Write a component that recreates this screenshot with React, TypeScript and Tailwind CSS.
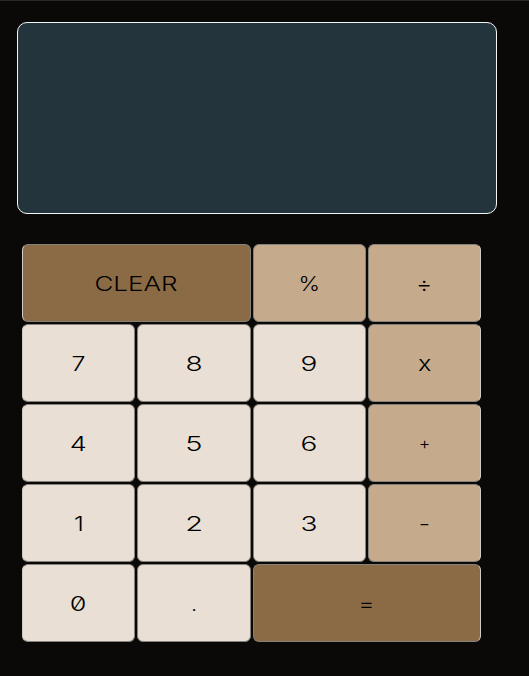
import React from "react";

type Tone = "light" | "tan" | "brown";

interface Key {
  label: string;
  tone: Tone;
  wide?: boolean;
  edge?: string;
  text?: string;
}

const tones: Record<Tone, string> = {
  light: "bg-[#e9dfd5]",
  tan: "bg-[#c5ab8c]",
  brown: "bg-[#8b6b45]",
};

const first = "border-l-[#cfcbc7]";
const last = "border-r-[#cfcbc7]";

const keys: Key[] = [
  { label: "CLEAR", tone: "brown", wide: true, edge: first, text: "scale-x-[1.3] mr-[2px]" },
  { label: "%", tone: "tan", text: "scale-x-[1.15]" },
  { label: "÷", tone: "tan", edge: last, text: "text-[22px] scale-x-[1.1]" },
  { label: "7", tone: "light", edge: first },
  { label: "8", tone: "light", text: "scale-x-[1.4]" },
  { label: "9", tone: "light", text: "scale-x-[1.4]" },
  { label: "x", tone: "tan", edge: last, text: "text-[21px] scale-x-[1.2]" },
  { label: "4", tone: "light", edge: first, text: "scale-x-[1.35]" },
  { label: "5", tone: "light", text: "scale-x-[1.45]" },
  { label: "6", tone: "light", text: "scale-x-[1.4]" },
  { label: "+", tone: "tan", edge: last, text: "text-[17px] scale-x-[1.05]" },
  { label: "1", tone: "light", edge: first },
  { label: "2", tone: "light", text: "scale-x-[1.45]" },
  { label: "3", tone: "light", text: "scale-x-[1.4]" },
  { label: "-", tone: "tan", edge: last },
  { label: "0", tone: "light", edge: first, text: "scale-x-[1.35]" },
  { label: ".", tone: "light", text: "scale-x-100" },
  { label: "=", tone: "brown", wide: true, edge: last },
];

function CalcButton({ label, tone, wide, edge = "", text = "scale-x-[1.25]" }: Key) {
  return (
    <button
      className={`flex items-center justify-center rounded-[6px] border border-[#85827c] pt-[2px] ${edge} ${tones[tone]} ${wide ? "col-span-2" : ""}`}
    >
      <span className={`inline-block slashed-zero text-black ${text}`}>{label}</span>
    </button>
  );
}

export default function App() {
  return (
    <main className="h-[676px] w-full overflow-hidden border-t border-[#29292b] bg-[#0a0907] pl-[17px] pt-[21px] font-['Inter',sans-serif] text-[20px] font-light">
      <div className="h-[191.5px] w-[479.5px] rounded-[10px] border-[1.5px] border-[#f2f5f5] bg-[#24343c]" />
      <div className="ml-[5px] mt-[30.5px] grid w-[459px] auto-rows-[78px] grid-cols-[113px_114px_113px_113px] gap-[2px]">
        {keys.map((key) => (
          <CalcButton key={key.label} {...key} />
        ))}
      </div>
    </main>
  );
}
